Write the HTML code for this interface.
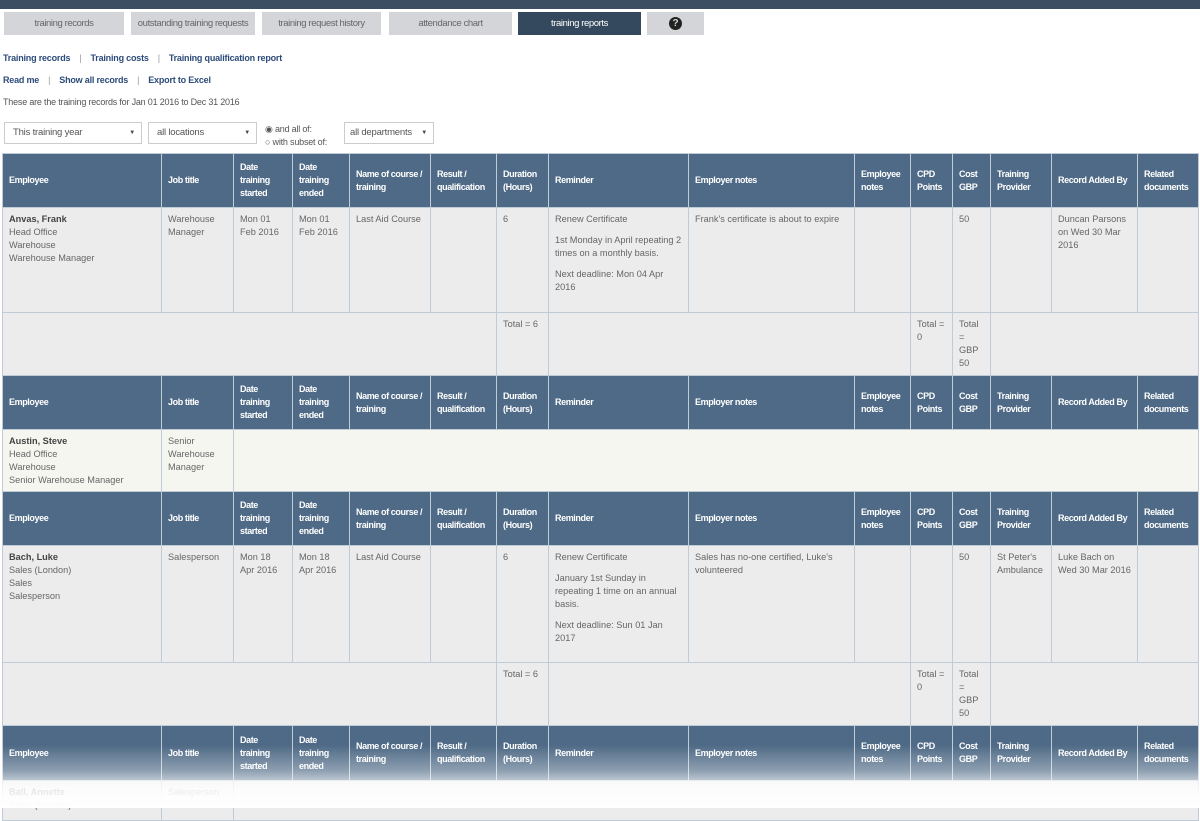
<!DOCTYPE html>
<html><head><style>
*{box-sizing:border-box;margin:0;padding:0}
body{width:1200px;height:808px;overflow:hidden;background:#fff;font-family:"Liberation Sans",sans-serif;font-size:9px;color:#555;position:relative;letter-spacing:-0.2px}
.top{position:absolute;left:0;top:0;width:1200px;height:9px;background:#3b4e62}
.tab{position:absolute;top:12px;height:23px;background:#d4d5d9;color:#666;font-size:9.5px;text-align:center;line-height:23px;white-space:nowrap;letter-spacing:-0.4px}
.tab.on{background:#34495e;color:#fff}
.links{position:absolute;left:3px;font-size:9px;font-weight:bold;color:#2d4b7a;white-space:nowrap}
.links span{color:#999;font-weight:normal;margin:0 9px}
.sel{position:absolute;top:122px;height:22px;border:1px solid #ccc;background:#fff;font-size:9.5px;color:#555;line-height:20px;padding-left:8px;white-space:nowrap}
.sel:after{content:"▼";position:absolute;right:6px;font-size:6px;color:#444}
table{position:absolute;left:2px;top:153px;border-collapse:collapse;table-layout:fixed;width:1196px}
td{border:1px solid #bfcbd7;vertical-align:top;padding:5px 6px 3px;font-size:9.2px;line-height:13px;background:#ececec;color:#666;overflow:hidden;letter-spacing:0}
tr.h td{background:#4f6a86;color:#fff;font-weight:bold;vertical-align:middle;padding:2px 6px;font-size:9px;line-height:13px;letter-spacing:-0.4px}
td p{margin-bottom:8px}
b{color:#444}
.fade{position:absolute;left:0;top:745px;width:1200px;height:63px;background:linear-gradient(rgba(255,255,255,0),rgba(255,255,255,.35) 40%,rgba(255,255,255,.85) 70%,#fff)}
</style></head><body>
<div class="top"></div>
<div class="tab" style="left:4px;width:120px">training records</div>
<div class="tab" style="left:131px;width:124px">outstanding training requests</div>
<div class="tab" style="left:262px;width:119px">training request history</div>
<div class="tab" style="left:389px;width:123px">attendance chart</div>
<div class="tab on" style="left:518px;width:123px">training reports</div>
<div class="tab" style="left:647px;width:57px"><span style="display:inline-block;width:13px;height:13px;border-radius:50%;background:#222;color:#d4d5d9;font-weight:bold;line-height:13px;font-size:10px;vertical-align:middle;letter-spacing:0">?</span></div>
<div class="links" style="top:53px">Training records<span>|</span>Training costs<span>|</span>Training qualification report</div>
<div class="links" style="top:75px">Read me<span>|</span>Show all records<span>|</span>Export to Excel</div>
<div style="position:absolute;left:3px;top:97px;font-size:9px;color:#555">These are the training records for Jan 01 2016 to Dec 31 2016</div>
<div class="sel" style="left:4px;width:138px">This training year</div>
<div class="sel" style="left:148px;width:109px">all locations</div>
<div style="position:absolute;left:265px;top:123px;font-size:9px;line-height:13px;color:#555">◉ and all of:<br>○ with subset of:</div>
<div class="sel" style="left:344px;width:90px;padding-left:5px">all departments</div>
<table>
<colgroup><col style="width:159px"><col style="width:72px"><col style="width:59px"><col style="width:57px"><col style="width:81px"><col style="width:66px"><col style="width:52px"><col style="width:140px"><col style="width:166px"><col style="width:56px"><col style="width:42px"><col style="width:38px"><col style="width:61px"><col style="width:86px"><col style="width:61px"></colgroup>
<tr class="h" style="height:54px"><td>Employee</td><td>Job title</td><td>Date training started</td><td>Date training ended</td><td>Name of course / training</td><td>Result / qualification</td><td>Duration (Hours)</td><td>Reminder</td><td>Employer notes</td><td>Employee notes</td><td>CPD Points</td><td>Cost GBP</td><td>Training Provider</td><td>Record Added By</td><td>Related documents</td></tr>
<tr style="height:105px"><td><b>Anvas, Frank</b><br>Head Office<br>Warehouse<br>Warehouse Manager</td><td>Warehouse Manager</td><td>Mon 01 Feb 2016</td><td>Mon 01 Feb 2016</td><td>Last Aid Course</td><td></td><td>6</td><td><p>Renew Certificate</p><p>1st Monday in April repeating 2 times on a monthly basis.</p>Next deadline: Mon 04 Apr 2016</td><td>Frank's certificate is about to expire</td><td></td><td></td><td>50</td><td></td><td>Duncan Parsons on Wed 30 Mar 2016</td><td></td></tr>
<tr style="height:63px"><td colspan="6"></td><td>Total = 6</td><td colspan="3"></td><td>Total = 0</td><td>Total = GBP 50</td><td colspan="3"></td></tr>
<tr class="h" style="height:54px"><td>Employee</td><td>Job title</td><td>Date training started</td><td>Date training ended</td><td>Name of course / training</td><td>Result / qualification</td><td>Duration (Hours)</td><td>Reminder</td><td>Employer notes</td><td>Employee notes</td><td>CPD Points</td><td>Cost GBP</td><td>Training Provider</td><td>Record Added By</td><td>Related documents</td></tr>
<tr style="height:62px"><td style="background:#f6f6f1"><b>Austin, Steve</b><br>Head Office<br>Warehouse<br>Senior Warehouse Manager</td><td style="background:#f6f6f1">Senior Warehouse Manager</td><td colspan="13" style="background:#f6f6f1"></td></tr>
<tr class="h" style="height:54px"><td>Employee</td><td>Job title</td><td>Date training started</td><td>Date training ended</td><td>Name of course / training</td><td>Result / qualification</td><td>Duration (Hours)</td><td>Reminder</td><td>Employer notes</td><td>Employee notes</td><td>CPD Points</td><td>Cost GBP</td><td>Training Provider</td><td>Record Added By</td><td>Related documents</td></tr>
<tr style="height:117px"><td><b>Bach, Luke</b><br>Sales (London)<br>Sales<br>Salesperson</td><td>Salesperson</td><td>Mon 18 Apr 2016</td><td>Mon 18 Apr 2016</td><td>Last Aid Course</td><td></td><td>6</td><td><p>Renew Certificate</p><p>January 1st Sunday in repeating 1 time on an annual basis.</p>Next deadline: Sun 01 Jan 2017</td><td>Sales has no-one certified, Luke's volunteered</td><td></td><td></td><td>50</td><td>St Peter's Ambulance</td><td>Luke Bach on Wed 30 Mar 2016</td><td></td></tr>
<tr style="height:63px"><td colspan="6"></td><td>Total = 6</td><td colspan="3"></td><td>Total = 0</td><td>Total = GBP 50</td><td colspan="3"></td></tr>
<tr class="h" style="height:55px"><td>Employee</td><td>Job title</td><td>Date training started</td><td>Date training ended</td><td>Name of course / training</td><td>Result / qualification</td><td>Duration (Hours)</td><td>Reminder</td><td>Employer notes</td><td>Employee notes</td><td>CPD Points</td><td>Cost GBP</td><td>Training Provider</td><td>Record Added By</td><td>Related documents</td></tr>
<tr style="height:40px"><td><b>Ball, Annette</b><br>Sales (London)</td><td>Salesperson</td><td colspan="13"></td></tr>
</table>
<div class="fade"></div>
</body></html>
